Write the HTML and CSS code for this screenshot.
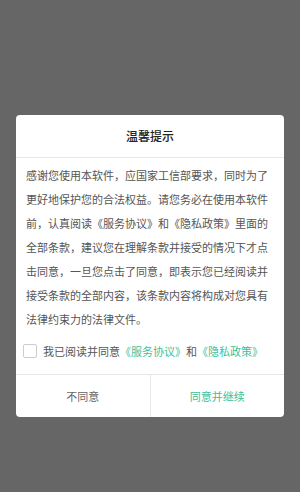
FILE: index.html
```html
<!DOCTYPE html>
<html lang="zh">
<head>
<meta charset="utf-8">
<link rel="stylesheet" href="styles.css">
</head>
<body>
<div class="dialog">
  <div class="dialog-title">温馨提示</div>
  <div class="dialog-body">感谢您使用本软件，应国家工信部要求，同时为了更好地保护您的合法权益。请您务必在使用本软件前，认真阅读《服务协议》和《隐私政策》里面的全部条款，建议您在理解条款并接受的情况下才点击同意，一旦您点击了同意，即表示您已经阅读并接受条款的全部内容，该条款内容将构成对您具有法律约束力的法律文件。</div>
  <div class="agree-row">
    <span class="checkbox"></span>
    <span class="agree-text">我已阅读并同意<span class="link">《服务协议》</span>和<span class="link">《隐私政策》</span></span>
  </div>
  <div class="dialog-footer">
    <div class="btn btn-cancel">不同意</div>
    <div class="btn btn-ok">同意并继续</div>
  </div>
</div>
</body>
</html>
```
FILE: styles.css
```css
html, body {
  margin: 0;
  padding: 0;
}
body {
  width: 300px;
  height: 492px;
  background: #666666;
  font-family: "Noto Sans CJK SC", "Noto Sans", sans-serif;
  display: flex;
  flex-direction: column;
  align-items: center;
  padding-top: 115px;
  box-sizing: border-box;
  overflow: hidden;
}
.dialog {
  width: 268px;
  background: #ffffff;
  border-radius: 4px;
  overflow: hidden;
}
.dialog-title {
  height: 42px;
  line-height: 42px;
  text-align: center;
  font-size: 12px;
  font-weight: 500;
  color: #222222;
  border-bottom: 1px solid #e6e6e6;
}
.dialog-body {
  padding: 5px 10px 2px 10px;
  font-size: 11px;
  line-height: 24px;
  color: #555555;
}
.agree-row {
  height: 41px;
  box-sizing: border-box;
  padding: 11px 0 0 7px;
  display: flex;
  align-items: flex-start;
}
.checkbox {
  width: 14px;
  height: 14px;
  box-sizing: border-box;
  border: 1px solid #cccccc;
  border-radius: 2px;
  flex: none;
}
.agree-text {
  margin-left: 6px;
  font-size: 11px;
  line-height: 14px;
  color: #555555;
}
.link {
  color: #3dbf9b;
}
.dialog-footer {
  display: flex;
  border-top: 1px solid #e6e6e6;
  height: 42px;
}
.btn {
  flex: 1;
  display: flex;
  align-items: center;
  justify-content: center;
  font-size: 11px;
}
.btn-cancel {
  color: #666666;
}
.btn-ok {
  color: #3dbf9b;
  border-left: 1px solid #e6e6e6;
}
```
